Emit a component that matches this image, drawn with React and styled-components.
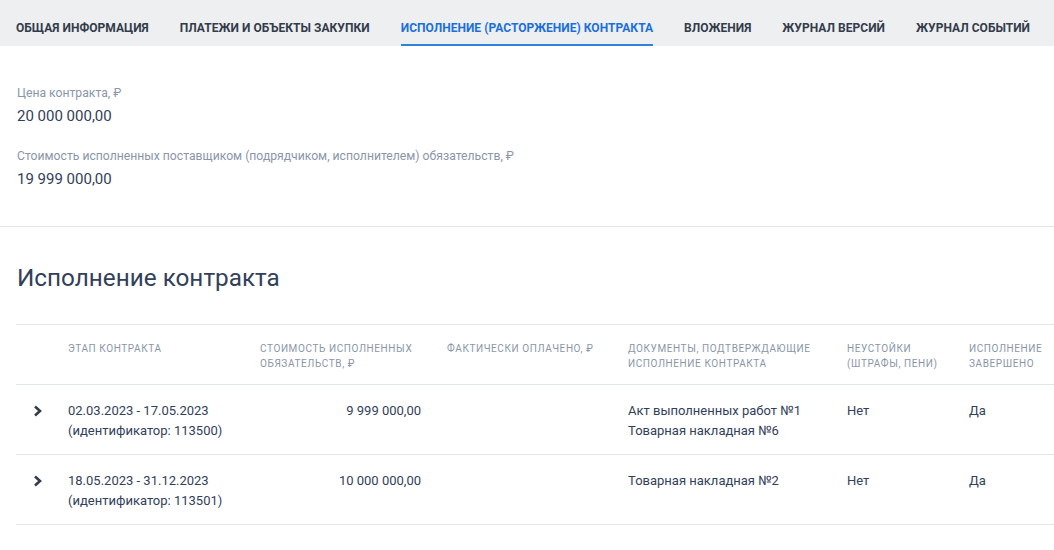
import React from 'react';
import styled, { createGlobalStyle } from 'styled-components';

const GlobalStyle = createGlobalStyle`
  body {
    margin: 0;
    background: #fff;
    font-family: Roboto, 'Liberation Sans', sans-serif;
    color: #334059;
  }
`;

const Tabs = styled.nav`
  display: flex;
  gap: 31px;
  height: 46px;
  padding: 0 16px;
  background: #eeeff1;
  white-space: nowrap;
  overflow: hidden;
`;

const Tab = styled.div`
  height: 46px;
  box-sizing: border-box;
  padding-top: 21px;
  font-size: 12px;
  line-height: 14px;
  font-weight: 700;
  letter-spacing: 0.03px;
  text-transform: uppercase;
  color: ${(p) => (p.$active ? '#1a6fdb' : '#333c4a')};
  border-bottom: 2px solid ${(p) => (p.$active ? '#2d83db' : 'transparent')};
`;

const Summary = styled.section`
  display: flex;
  flex-direction: column;
  gap: 22px;
  padding: 39px 17px 37px;
  border-bottom: 1px solid #e4e6ee;
`;

const Field = styled.div`
  display: flex;
  flex-direction: column;
  gap: 5px;
`;

const Label = styled.div`
  font-size: 12.2px;
  line-height: 16px;
  color: #8a96a8;
`;

const Value = styled.div`
  font-size: 15px;
  line-height: 20px;
  color: #334059;
`;

const Section = styled.section`
  padding: 36px 0 0 16px;
`;

const Heading = styled.h2`
  margin: 0 0 31px 1px;
  font-size: 24.3px;
  font-weight: 400;
  line-height: 30px;
  color: #334059;
`;

const Table = styled.div`
  border-top: 1px solid #e4e6ee;
`;

const Row = styled.div`
  display: grid;
  grid-template-columns: 52px 192px 187px 181px 219px 122px 1fr;
  border-bottom: 1px solid #e4e6ee;
  min-height: ${(p) => (p.$head ? '59px' : '69px')};
`;

const HeadCell = styled.div`
  padding: 16px 8px 0 0;
  font-size: 10px;
  line-height: 15px;
  letter-spacing: 0.6px;
  text-transform: uppercase;
  color: #8a96a8;
  white-space: nowrap;
`;

const Cell = styled.div`
  padding: 16px 12px 0 0;
  font-size: 13px;
  line-height: 19.5px;
  color: #334059;
  text-align: ${(p) => (p.$right ? 'right' : 'left')};
  padding-right: ${(p) => (p.$right ? '26px' : '12px')};
`;

const Toggle = styled.div`
  display: flex;
  padding: 20px 0 0 17px;
  color: #333c4a;
`;

const Chevron = () => (
  <svg width="10" height="12" viewBox="0 0 10 12">
    <path d="M2 1.5 L7 6 L2 10.5" fill="none" stroke="currentColor" strokeWidth="2.6" />
  </svg>
);

const tabs = [
  'Общая информация',
  'Платежи и объекты закупки',
  'Исполнение (расторжение) контракта',
  'Вложения',
  'Журнал версий',
  'Журнал событий',
];

const rows = [
  {
    stage: ['02.03.2023 - 17.05.2023', '(идентификатор: 113500)'],
    cost: '9 999 000,00',
    docs: ['Акт выполненных работ №1', 'Товарная накладная №6'],
  },
  {
    stage: ['18.05.2023 - 31.12.2023', '(идентификатор: 113501)'],
    cost: '10 000 000,00',
    docs: ['Товарная накладная №2'],
  },
];

export default function App() {
  return (
    <>
      <GlobalStyle />
      <Tabs>
        {tabs.map((t, i) => (
          <Tab key={t} $active={i === 2}>{t}</Tab>
        ))}
      </Tabs>

      <Summary>
        <Field>
          <Label>Цена контракта, ₽</Label>
          <Value>20 000 000,00</Value>
        </Field>
        <Field>
          <Label>Стоимость исполненных поставщиком (подрядчиком, исполнителем) обязательств, ₽</Label>
          <Value>19 999 000,00</Value>
        </Field>
      </Summary>

      <Section>
        <Heading>Исполнение контракта</Heading>
        <Table>
          <Row $head>
            <HeadCell />
            <HeadCell>Этап контракта</HeadCell>
            <HeadCell>Стоимость исполненных<br />обязательств, ₽</HeadCell>
            <HeadCell>Фактически оплачено, ₽</HeadCell>
            <HeadCell>Документы, подтверждающие<br />исполнение контракта</HeadCell>
            <HeadCell>Неустойки<br />(штрафы, пени)</HeadCell>
            <HeadCell>Исполнение<br />завершено</HeadCell>
          </Row>
          {rows.map((r) => (
            <Row key={r.stage[0]}>
              <Toggle><Chevron /></Toggle>
              <Cell>{r.stage[0]}<br />{r.stage[1]}</Cell>
              <Cell $right>{r.cost}</Cell>
              <Cell />
              <Cell>
                {r.docs.map((d) => (
                  <div key={d}>{d}</div>
                ))}
              </Cell>
              <Cell>Нет</Cell>
              <Cell>Да</Cell>
            </Row>
          ))}
        </Table>
      </Section>
    </>
  );
}
